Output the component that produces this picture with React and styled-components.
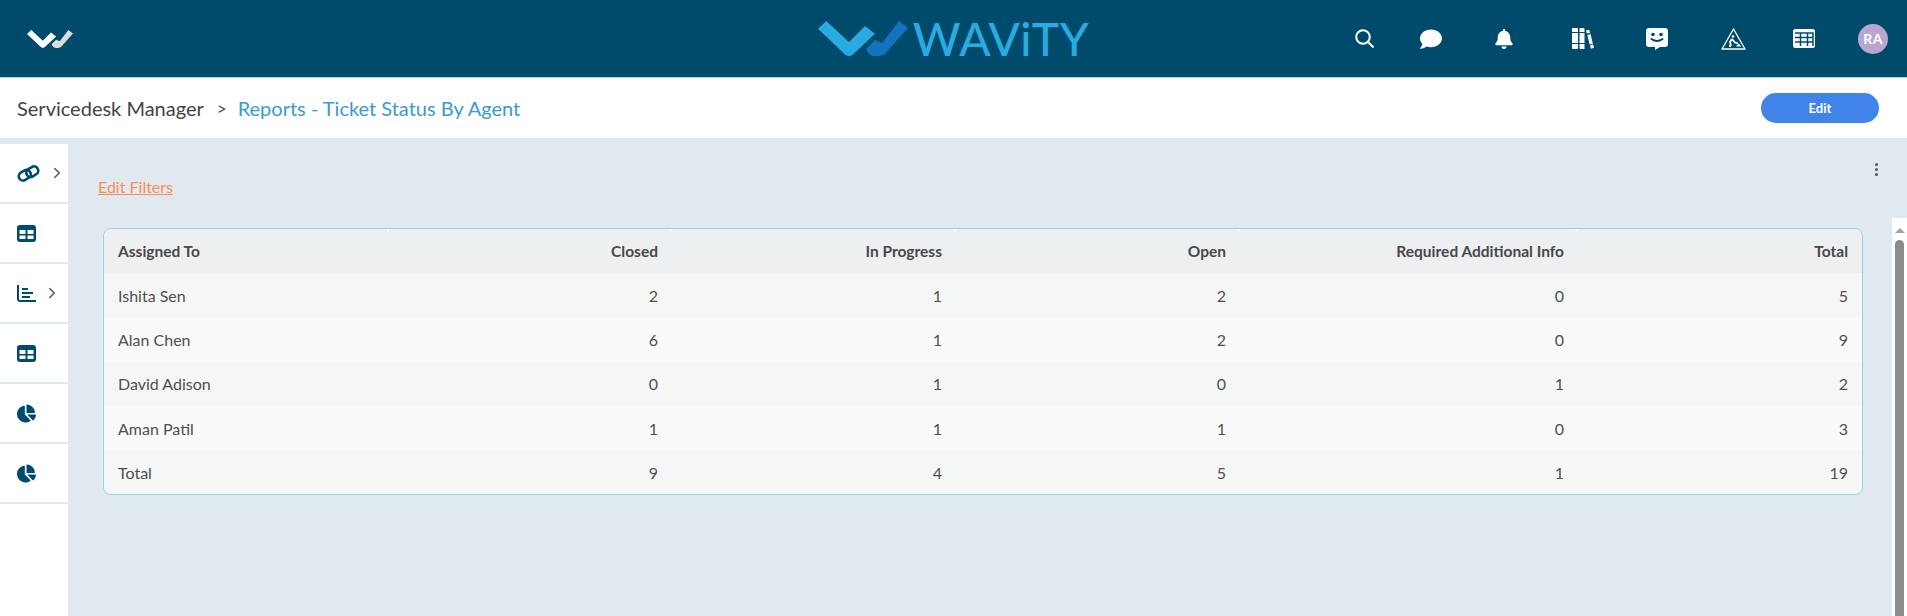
import React from 'react';
import styled, { createGlobalStyle } from 'styled-components';
import { FaBell, FaChartPie, FaComment } from 'react-icons/fa';
import { ChevronRight } from 'lucide-react';

const NAVY = '#004b6b';
const PAGE_BG = '#e1e9f0';

const GlobalStyle = createGlobalStyle`
    html, body {
        margin: 0;
        height: 100%;
        overflow: hidden;
        background: #fff;
    }
    body {
        font-family: Lato, "Open Sans", Arial, sans-serif;
        color: #4a4a4a;
    }
`;

const Page = styled.div`
    height: 100vh;
    display: flex;
    flex-direction: column;
`;

const Header = styled.header`
    height: 77px;
    flex: none;
    background: ${NAVY};
    border-bottom: 1px solid #a3dcec;
    display: grid;
    grid-template-columns: 1fr auto 1fr;
    align-items: center;
`;

const HomeLogo = styled.div`
    padding: 1px 0 0 27px;
    display: flex;
`;

const Brand = styled.div`
    display: flex;
    align-items: center;
    gap: 5px;
`;

const BrandName = styled.span`
    font-size: 46px;
    line-height: 46px;
    font-weight: 500;
    color: #29abe2;
    letter-spacing: 0.5px;
`;

const NavIcons = styled.nav`
    display: flex;
    justify-content: flex-end;
    align-items: center;
    padding-right: 19px;
    color: #fff;
`;

const NavIcon = styled.span`
    display: flex;
    margin-left: ${props => props.$gap}px;
`;

const Avatar = styled.span`
    width: 30px;
    height: 30px;
    margin-left: 43px;
    border-radius: 50%;
    background: #b8a5d0;
    color: #fff;
    font-size: 14px;
    font-weight: 700;
    letter-spacing: 0.5px;
    display: flex;
    align-items: center;
    justify-content: center;
`;

const Crumbs = styled.div`
    height: 60px;
    flex: none;
    display: flex;
    align-items: center;
    justify-content: space-between;
    padding: 0 28px 0 17px;
    background: #fff;
`;

const CrumbTrail = styled.div`
    display: flex;
    align-items: center;
    font-size: 20px;
`;

const CrumbParent = styled.span`
    color: #444;
`;

const CrumbSeparator = styled.span`
    color: #444;
    font-size: 17px;
    margin: 0 11px 0 13px;
`;

const CrumbCurrent = styled.span`
    color: #3a9bd0;
`;

const EditButton = styled.button`
    width: 118px;
    height: 30px;
    border: none;
    border-radius: 15px;
    background: #4184e9;
    color: #fff;
    font-family: inherit;
    font-size: 13px;
    font-weight: 700;
`;

const Body = styled.div`
    flex: 1;
    min-height: 0;
    display: flex;
    background: ${PAGE_BG};
`;

const Sidebar = styled.aside`
    width: 68px;
    flex: none;
    margin-top: 6px;
    background: #fff;
`;

const SideItem = styled.div`
    height: 58px;
    box-sizing: border-box;
    height: 60px;
    padding-left: 17px;
    border-bottom: 2px solid ${PAGE_BG};
    display: flex;
    align-items: center;
    gap: ${props => props.$gap || 0}px;
    color: ${NAVY};
`;

const SideChevron = styled(ChevronRight)`
    color: #555;
    margin-left: -5px;
`;

const Content = styled.main`
    flex: 1;
    min-width: 0;
    display: flex;
    flex-direction: column;
`;

const TopBar = styled.div`
    height: 80px;
    flex: none;
    box-sizing: border-box;
    padding: 25px 29px 0 30px;
    display: flex;
    justify-content: space-between;
    align-items: flex-start;
`;

const FilterLink = styled.a`
    margin-top: 14px;
    color: #f98d57;
    font-size: 16px;
    line-height: 20px;
    text-decoration: underline;
`;

const MoreDots = styled.div`
    display: flex;
    flex-direction: column;
    gap: 2px;
`;

const Dot = styled.i`
    width: 3px;
    height: 3px;
    border-radius: 50%;
    background: #555;
`;

const LowerRow = styled.div`
    flex: 1;
    min-height: 0;
    display: flex;
`;

const TableArea = styled.div`
    flex: 1;
    min-width: 0;
    padding: 10px 29px 0 35px;
`;

const ScrollTrack = styled.div`
    width: 15px;
    flex: none;
    background: #fff;
    display: flex;
    flex-direction: column;
    align-items: center;
    padding-top: 10px;
    box-sizing: border-box;
`;

const ScrollArrow = styled.i`
    width: 0;
    height: 0;
    border-left: 5px solid transparent;
    border-right: 5px solid transparent;
    border-bottom: 5px solid #a3a3a3;
    margin-bottom: 7px;
`;

const ScrollThumb = styled.div`
    width: 9px;
    flex: 1;
    border-radius: 5px 5px 0 0;
    background: #8c8c8c;
`;

const TableFrame = styled.div`
    border: 1px solid #93d5e8;
    border-radius: 8px;
    overflow: hidden;
`;

const Table = styled.table`
    width: 100%;
    table-layout: fixed;
    border-collapse: collapse;
    font-size: 16px;
    color: #4f4f4f;
`;

const HeadCell = styled.th`
    position: relative;
    height: 44px;
    padding: 0 14px;
    background: #eeeff1;
    color: #484848;
    font-size: 15.5px;
    font-weight: 700;
    text-align: ${props => (props.$left ? 'left' : 'right')};

    &:not(:last-child)::after {
        content: '';
        position: absolute;
        top: 0;
        right: -3px;
        border-left: 3px solid transparent;
        border-right: 3px solid transparent;
        border-top: 4px solid #fff;
    }
`;

const Row = styled.tr`
    background: ${props => (props.$odd ? '#f5f7f7' : '#fafafa')};
`;

const Cell = styled.td`
    height: 44.3px;
    padding: 0 14px;
    text-align: ${props => (props.$left ? 'left' : 'right')};
`;

const LogoMark = ({ width, main, accent }) => (
    <svg width={width} viewBox="0 0 90 35" style={{ display: 'block' }}>
        <path fill={main} d="M0 7.7 8.3 0 31 21 47 5l10 7.7L35 33.5q-4 3-8 0z" />
        <path fill={accent} d="M48 28l9-9 7 3L81 0l9 7-23 26q-3 2-6 2h-5q-3 0-5-2z" />
    </svg>
);

const SearchIcon = () => (
    <svg width="19" height="19" viewBox="0 0 19 19" fill="none" stroke="currentColor" strokeWidth="2">
        <circle cx="8" cy="8" r="6.8" />
        <path d="M12.8 12.8 18.5 18.5" />
    </svg>
);

const BooksIcon = () => (
    <svg width="22" height="21" viewBox="0 0 22 21" fill="currentColor">
        <path d="M0 1q0-1 1-1h4q1 0 1 1v3H0zM0 5h6v10H0zM0 16h6v4q0 1-1 1H1q-1 0-1-1z" />
        <path d="M7.5 1q0-1 1-1h3q1 0 1 1v3h-5zM7.5 5h5v10h-5zM7.5 16h5v5h-4q-1 0-1-1z" />
        <path d="M14 2.5l3-.8 1.200 3-3.300.9zM15.300 7l3.200-.9 2.400 9.600-3.200.8zM18 17.400l3.200-.8.800 3.200-3 .9z" />
    </svg>
);

const SmileMessageIcon = () => (
    <svg width="22" height="22" viewBox="0 0 22 22">
        <path fill="#fff" d="M3 0h16q3 0 3 3v13q0 3-3 3h-5l-5 3v-3H3q-3 0-3-3V3q0-3 3-3z" />
        <circle cx="7" cy="6.500" r="1.800" fill={NAVY} />
        <circle cx="15" cy="6.500" r="1.800" fill={NAVY} />
        <path d="M5.500 11q5.500 4 11 0" fill="none" stroke={NAVY} strokeWidth="2" strokeLinecap="round" />
    </svg>
);

const RoadWorkIcon = () => (
    <svg width="25" height="22" viewBox="0 0 25 22" fill="none" stroke="#fff">
        <path d="M12.500 1 24 21H1z" strokeWidth="1.300" strokeLinejoin="round" />
        <circle cx="12" cy="8.500" r="1.300" fill="#fff" stroke="none" />
        <path d="M11 11l-2 3 1 4M11 11l3 3.500 3 1M8 18h2" strokeWidth="1.800" />
        <path d="M15 18.500l2.500-3 3 3z" fill="#fff" stroke="none" />
    </svg>
);

const GridIcon = () => (
    <svg width="22" height="19" viewBox="0 0 22 19">
        <rect width="22" height="19" rx="2.500" fill="#fff" />
        <path d="M7.500 4v13M14.500 4v13M2 4h18v13M2 8.500h18M2 13h18" stroke={NAVY} strokeWidth="1.500" fill="none" />
    </svg>
);

const LinkIcon = () => (
    <svg width="23" height="17" viewBox="0 0 23 17" fill="none" stroke={NAVY} strokeWidth="2.600">
        <rect x="1.500" y="6" width="12.500" height="8.500" rx="4.200" transform="rotate(-32 7.700 10.200)" />
        <rect x="9" y="2.500" width="12.500" height="8.500" rx="4.200" transform="rotate(-32 15.200 6.700)" />
    </svg>
);

const TableIcon = () => (
    <svg width="19" height="17" viewBox="0 0 19 17" style={{ display: 'block' }}>
        <rect width="19" height="17" rx="3" fill={NAVY} />
        <path fill="#fff" d="M2.500 5h6v4h-6zM10.500 5h6v4h-6zM2.500 10.500h6V14h-6zM10.500 10.500h6V14h-6z" />
    </svg>
);

const ChartIcon = () => (
    <svg width="19" height="17" viewBox="0 0 19 17" fill="none" stroke={NAVY} style={{ display: 'block' }}>
        <path d="M1 0v14q0 2 2 2h16" strokeWidth="2" />
        <path d="M5 4h6M5 8h11M5 12h8" strokeWidth="2" />
    </svg>
);

const sideItems = [
    { icon: <LinkIcon />, chevron: true, gap: 13 },
    { icon: <TableIcon /> },
    { icon: <ChartIcon />, chevron: true, gap: 12 },
    { icon: <TableIcon /> },
    { icon: <FaChartPie size={19} /> },
    { icon: <FaChartPie size={19} /> },
];

const columns = [
    { label: 'Assigned To', width: 285, left: true },
    { label: 'Closed', width: 283 },
    { label: 'In Progress', width: 284 },
    { label: 'Open', width: 284 },
    { label: 'Required Additional Info', width: 338 },
    { label: 'Total', width: 284 },
];

const rows = [
    ['Ishita Sen', 2, 1, 2, 0, 5],
    ['Alan Chen', 6, 1, 2, 0, 9],
    ['David Adison', 0, 1, 0, 1, 2],
    ['Aman Patil', 1, 1, 1, 0, 3],
    ['Total', 9, 4, 5, 1, 19],
];

const App = () => {
    return (
        <Page>
            <GlobalStyle />
            <Header>
                <HomeLogo>
                    <LogoMark width={46} main="#fff" accent="#dcdcdc" />
                </HomeLogo>
                <Brand>
                    <LogoMark width={90} main="#29abe2" accent="#1273bd" />
                    <BrandName>WAViTY</BrandName>
                </Brand>
                <NavIcons>
                    <NavIcon $gap={0}><SearchIcon /></NavIcon>
                    <NavIcon $gap={46}><FaComment size={22} /></NavIcon>
                    <NavIcon $gap={52}><FaBell size={20} /></NavIcon>
                    <NavIcon $gap={58}><BooksIcon /></NavIcon>
                    <NavIcon $gap={52}><SmileMessageIcon /></NavIcon>
                    <NavIcon $gap={53}><RoadWorkIcon /></NavIcon>
                    <NavIcon $gap={47}><GridIcon /></NavIcon>
                    <Avatar>RA</Avatar>
                </NavIcons>
            </Header>
            <Crumbs>
                <CrumbTrail>
                    <CrumbParent>Servicedesk Manager</CrumbParent>
                    <CrumbSeparator>&gt;</CrumbSeparator>
                    <CrumbCurrent>Reports - Ticket Status By Agent</CrumbCurrent>
                </CrumbTrail>
                <EditButton>Edit</EditButton>
            </Crumbs>
            <Body>
                <Sidebar>
                    {sideItems.map((item, i) => (
                        <SideItem key={i} $gap={item.gap}>
                            {item.icon}
                            {item.chevron && <SideChevron size={18} />}
                        </SideItem>
                    ))}
                </Sidebar>
                <Content>
                    <TopBar>
                        <FilterLink>Edit Filters</FilterLink>
                        <MoreDots>
                            <Dot />
                            <Dot />
                            <Dot />
                        </MoreDots>
                    </TopBar>
                    <LowerRow>
                        <TableArea>
                            <TableFrame>
                                <Table>
                                    <colgroup>
                                        {columns.map(col => (
                                            <col key={col.label} style={{ width: col.width }} />
                                        ))}
                                    </colgroup>
                                    <thead>
                                        <tr>
                                            {columns.map(col => (
                                                <HeadCell key={col.label} $left={col.left}>{col.label}</HeadCell>
                                            ))}
                                        </tr>
                                    </thead>
                                    <tbody>
                                        {rows.map((row, i) => (
                                            <Row key={row[0]} $odd={i % 2 === 0}>
                                                {row.map((value, j) => (
                                                    <Cell key={j} $left={j === 0}>{value}</Cell>
                                                ))}
                                            </Row>
                                        ))}
                                    </tbody>
                                </Table>
                            </TableFrame>
                        </TableArea>
                        <ScrollTrack>
                            <ScrollArrow />
                            <ScrollThumb />
                        </ScrollTrack>
                    </LowerRow>
                </Content>
            </Body>
        </Page>
    );
};

export default App;
